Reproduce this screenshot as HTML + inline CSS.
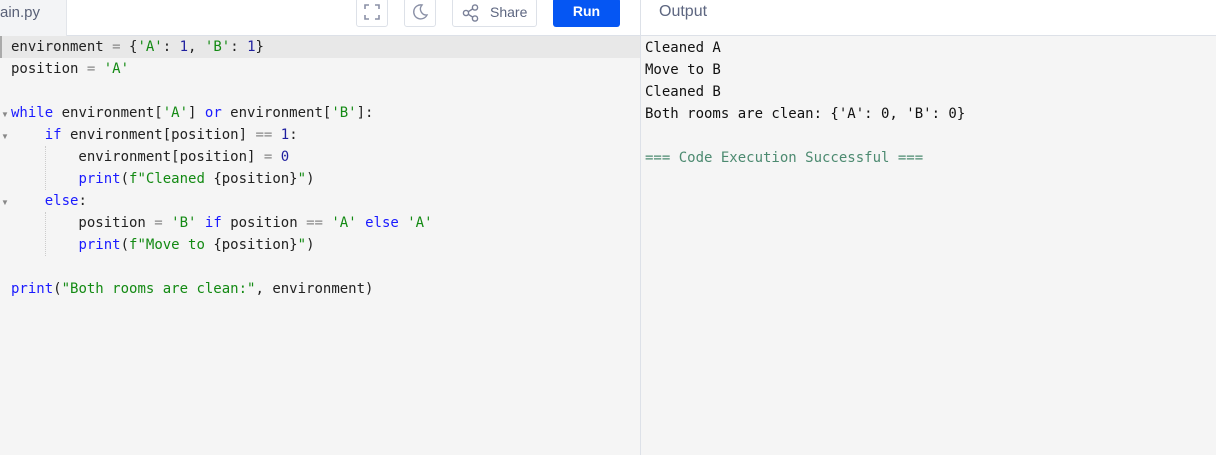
<!DOCTYPE html>
<html><head><style>
*{margin:0;padding:0;box-sizing:border-box}
body{width:1216px;height:455px;overflow:hidden;background:#f5f5f5;font-family:"Liberation Sans",sans-serif;position:relative}
.hdr{position:absolute;left:0;top:0;width:1216px;height:36px;background:#fff;border-bottom:1px solid #dde1e8}
.tab{position:absolute;left:0;top:0;width:67px;height:36px;background:#f3f4f6;border-right:1px solid #e2e5ea;color:#5a6178;font-size:15px;line-height:26px}
.btn{position:absolute;top:-2px;height:29px;border:1px solid #dde1e8;border-radius:3px;background:#fff}
.run{position:absolute;left:553px;top:-2px;width:67px;height:29px;background:#0556f3;border-radius:3px;color:#fff;font-weight:bold;font-size:14px;text-align:center;line-height:27px}
.out{position:absolute;left:659px;top:3px;color:#5d6680;font-size:16px}
.div{position:absolute;left:640px;top:0;width:1px;height:455px;background:#dde1e8}
.code{position:absolute;left:0;top:36px;font-family:"DejaVu Sans Mono","Liberation Mono",monospace;font-size:14px;line-height:22px;color:#222}
.ln{height:22px;padding-left:11px;white-space:pre}
.hl{background:#e8e8e8;width:640px;border-left:2px solid #aaa;padding-left:9px}
.k{color:#1a1aff}.s{color:#138a13}.n{color:#1f1f9f}.o{color:#888}
.ob{position:absolute;left:645px;top:37px;font-family:"DejaVu Sans Mono","Liberation Mono",monospace;font-size:14px;line-height:22px;color:#111;white-space:pre}
.g{color:#4c8a70}
.fold{position:absolute;left:1px;color:#888;font-size:8px}
.guide{position:absolute;width:0;border-left:1px dotted #ccc}
</style></head><body>
<div class="hdr"></div>
<div class="tab">ain.py</div>
<div class="btn" style="left:356px;width:32px"><svg width="30" height="27" viewBox="0 0 30 27"><path d="M8 10V6h4M18 6h4v4M22 16v4h-4M12 20H8v-4" fill="none" stroke="#8a90a6" stroke-width="1.6"/></svg></div>
<div class="btn" style="left:404px;width:32px"><svg width="30" height="27" viewBox="0 0 30 27"><path d="M17 6a7 7 0 1 0 5 10a6 6 0 0 1-5-10z" fill="none" stroke="#8a90a6" stroke-width="1.4"/></svg></div>
<div class="btn" style="left:452px;width:85px;color:#5d6680;font-size:14px;line-height:26px"><svg style="position:absolute;left:8px;top:4px" width="20" height="20" viewBox="0 0 20 20"><circle cx="5" cy="10" r="2.6" fill="none" stroke="#7a8098" stroke-width="1.4"/><circle cx="14" cy="4.5" r="2.6" fill="none" stroke="#7a8098" stroke-width="1.4"/><circle cx="14" cy="15.5" r="2.6" fill="none" stroke="#7a8098" stroke-width="1.4"/><path d="M7.3 8.7l4.4-2.8M7.3 11.3l4.4 2.8" stroke="#7a8098" stroke-width="1.4"/></svg><span style="position:absolute;left:37px">Share</span></div>
<div class="run">Run</div>
<div class="out">Output</div>
<div class="div"></div>
<div class="fold" style="top:110px">▼</div><div class="fold" style="top:132px">▼</div><div class="fold" style="top:198px">▼</div>
<div class="guide" style="left:45px;top:146px;height:44px"></div>
<div class="guide" style="left:45px;top:212px;height:44px"></div>
<div class="code"><div class="ln hl">environment <span class="o">=</span> {<span class="s">'A'</span>: <span class="n">1</span>, <span class="s">'B'</span>: <span class="n">1</span>}</div><div class="ln">position <span class="o">=</span> <span class="s">'A'</span></div><div class="ln"> </div><div class="ln"><span class="k">while</span> environment[<span class="s">'A'</span>] <span class="k">or</span> environment[<span class="s">'B'</span>]:</div><div class="ln">    <span class="k">if</span> environment[position] <span class="o">==</span> <span class="n">1</span>:</div><div class="ln">        environment[position] <span class="o">=</span> <span class="n">0</span></div><div class="ln">        <span class="k">print</span>(<span class="s">f"Cleaned </span>{position}<span class="s">"</span>)</div><div class="ln">    <span class="k">else</span>:</div><div class="ln">        position <span class="o">=</span> <span class="s">'B'</span> <span class="k">if</span> position <span class="o">==</span> <span class="s">'A'</span> <span class="k">else</span> <span class="s">'A'</span></div><div class="ln">        <span class="k">print</span>(<span class="s">f"Move to </span>{position}<span class="s">"</span>)</div><div class="ln"> </div><div class="ln"><span class="k">print</span>(<span class="s">"Both rooms are clean:"</span>, environment)</div></div>
<div class="ob">Cleaned A
Move to B
Cleaned B
Both rooms are clean: {'A': 0, 'B': 0}

<span class="g">=== Code Execution Successful ===</span></div>
</body></html>
